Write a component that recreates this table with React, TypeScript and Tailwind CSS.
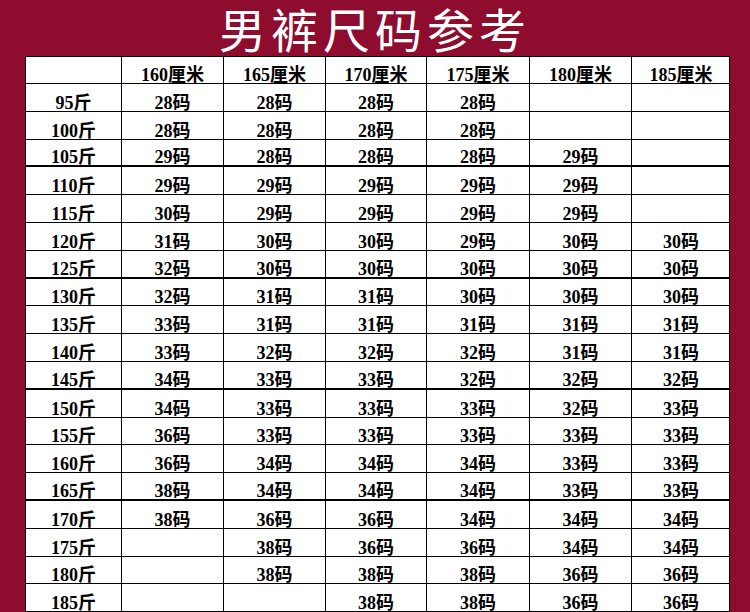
const heights = ["160厘米", "165厘米", "170厘米", "175厘米", "180厘米", "185厘米"];

const rows: [string, string[]][] = [
  ["95斤", ["28", "28", "28", "28", "", ""]],
  ["100斤", ["28", "28", "28", "28", "", ""]],
  ["105斤", ["29", "28", "28", "28", "29", ""]],
  ["110斤", ["29", "29", "29", "29", "29", ""]],
  ["115斤", ["30", "29", "29", "29", "29", ""]],
  ["120斤", ["31", "30", "30", "29", "30", "30"]],
  ["125斤", ["32", "30", "30", "30", "30", "30"]],
  ["130斤", ["32", "31", "31", "30", "30", "30"]],
  ["135斤", ["33", "31", "31", "31", "31", "31"]],
  ["140斤", ["33", "32", "32", "32", "31", "31"]],
  ["145斤", ["34", "33", "33", "32", "32", "32"]],
  ["150斤", ["34", "33", "33", "33", "32", "33"]],
  ["155斤", ["36", "33", "33", "33", "33", "33"]],
  ["160斤", ["36", "34", "34", "34", "33", "33"]],
  ["165斤", ["38", "34", "34", "34", "33", "33"]],
  ["170斤", ["38", "36", "36", "34", "34", "34"]],
  ["175斤", ["", "38", "36", "36", "34", "34"]],
  ["180斤", ["", "38", "38", "38", "36", "36"]],
  ["185斤", ["", "", "38", "38", "36", "36"]],
];

// thicker rule under these rows
const thick = [2, 6, 10, 14];

const cellFont = { fontFamily: '"Liberation Serif", "Noto Sans CJK SC", serif' };

function Cell({ text, heavy, last }: { text: string; heavy?: boolean; last?: boolean }) {
  return (
    <div
      className={`flex items-end justify-center border-black ${last ? "" : "border-r"} ${
        heavy ? "border-b-2" : "border-b"
      }`}
    >
      <span className="text-[18px] font-bold leading-none text-black translate-y-[1px]">{text}</span>
    </div>
  );
}

export default function App() {
  return (
    <div className="w-[750px] h-[612px] overflow-hidden bg-[#8e0c2e] flex flex-col">
      <div className="h-[57px] flex items-center justify-center">
        <h1
          className="text-white text-[47px] leading-[56px] tracking-[5px] font-normal"
          style={{ fontFamily: '"Noto Sans CJK SC", sans-serif' }}
        >
          男裤尺码参考
        </h1>
      </div>
      <div className="ml-[25px] w-[705px] bg-white border-t border-l border-r border-black" style={cellFont}>
        <div className="grid grid-cols-[96px_102px_102px_101px_103px_102px_98px] h-[27px]">
          <Cell text="" />
          {heights.map((h, i) => (
            <Cell key={h} text={h} last={i === heights.length - 1} />
          ))}
        </div>
        {rows.map(([w, sizes], r) => (
          <div
            key={w}
            className="grid grid-cols-[96px_102px_102px_101px_103px_102px_98px] h-[27.8px]"
          >
            <Cell text={w} heavy={thick.includes(r)} />
            {sizes.map((s, i) => (
              <Cell
                key={i}
                text={s ? s + "码" : ""}
                heavy={thick.includes(r)}
                last={i === sizes.length - 1}
              />
            ))}
          </div>
        ))}
      </div>
    </div>
  );
}
